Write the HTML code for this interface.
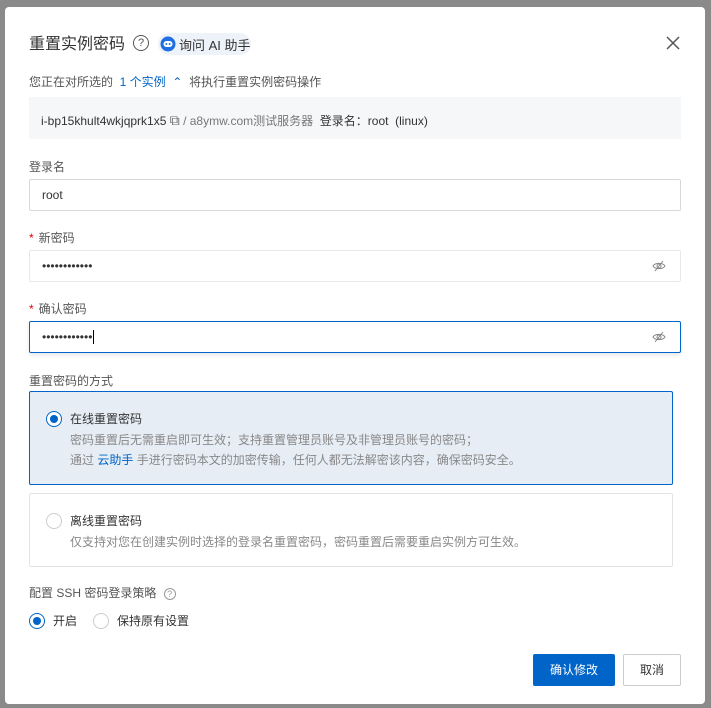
<!DOCTYPE html>
<html><head><meta charset="utf-8"><style>
*{box-sizing:border-box;margin:0;padding:0}
body{width:711px;height:708px;background:#8a8a8a;font-family:"Liberation Sans","Noto Sans CJK SC",sans-serif;font-size:12px;color:#333;position:relative;overflow:hidden}
.dlg{position:absolute;left:5px;top:7px;width:700px;height:697px;background:#fff;border-radius:4px}
.a{position:absolute}
.inp{position:absolute;left:24px;width:652px;height:32px;border:1px solid #d8d8d8;border-radius:2px;padding-left:12px;line-height:30px;font-size:12px;color:#333}
.lbl{position:absolute;left:24px;font-size:12px;color:#555}
.req{color:#d00;margin-right:5px}
.card{position:absolute;left:24px;width:644px;border:1px solid #e3e3e3;border-radius:2px}
.radio{position:absolute;width:16px;height:16px;border-radius:50%;border:1px solid #ccc;background:#fff}
.radio.on{border-color:#0064c8}
.radio.on::after{content:"";position:absolute;left:3px;top:3px;width:8px;height:8px;border-radius:50%;background:#0064c8}
.eye{position:absolute;right:14px;top:9px}
</style></head><body>
<div class="dlg">
<div class="a" style="left:24px;top:23px;font-size:16px;color:#333">重置实例密码</div>
<div class="a" style="left:128px;top:28px;width:16px;height:16px;border:1.3px solid #555;border-radius:50%;font-size:11px;line-height:14px;text-align:center;color:#555">?</div>
<div class="a" style="left:153px;top:26px;width:93px;height:22px;background:#eef3fa;border-radius:11px"></div>
<svg class="a" style="left:155px;top:29px" width="16" height="16" viewBox="0 0 16 16"><circle cx="8" cy="8" r="7.5" fill="#1f6fe0"/><rect x="3.5" y="5" width="9" height="6" rx="3" fill="#fff"/><circle cx="6.3" cy="8" r="1" fill="#1f6fe0"/><circle cx="9.7" cy="8" r="1" fill="#1f6fe0"/></svg>
<div class="a" style="left:174px;top:28px;font-size:13px;color:#333">询问 AI 助手</div>
<svg class="a" style="left:661px;top:29px" width="14" height="14" viewBox="0 0 14 14"><path d="M1 1L13 13M13 1L1 13" stroke="#555" stroke-width="1.5"/></svg>
<div class="a" style="left:24px;top:66px;color:#555">您正在对所选的&nbsp;&nbsp;<span style="color:#0064c8">1 个实例&nbsp;&nbsp;⌃</span>&nbsp;&nbsp;将执行重置实例密码操作</div>
<div class="a" style="left:24px;top:90px;width:652px;height:42px;background:#f6f7f9"></div>
<div class="a" style="left:36px;top:105px;color:#333">i-bp15khult4wkjqprk1x5 <span style="color:#666;font-size:14px">⧉</span> <span style="color:#777">/ a8ymw.com测试服务器</span>&nbsp;&nbsp;登录名：root&nbsp;&nbsp;(linux)</div>
<div class="lbl" style="top:151px">登录名</div>
<div class="inp" style="top:172px">root</div>
<div class="lbl" style="top:222px"><span class="req">*</span>新密码</div>
<div class="inp" style="top:243px;border-color:#e8e8e8">••••••••••••
<svg class="eye" width="14" height="12" viewBox="0 0 14 12"><path d="M1 6C3 2.5 11 2.5 13 6C11 9.5 3 9.5 1 6Z" fill="none" stroke="#888"/><circle cx="7" cy="6" r="2" fill="none" stroke="#888"/><path d="M11 1L3 11" stroke="#888"/></svg></div>
<div class="lbl" style="top:293px"><span class="req">*</span>确认密码</div>
<div class="inp" style="top:314px;border-color:#0064c8;box-shadow:0 2px 4px rgba(0,0,0,.1)">••••••••••••<span style="border-left:1px solid #000;margin-left:1px"></span>
<svg class="eye" width="14" height="12" viewBox="0 0 14 12"><path d="M1 6C3 2.5 11 2.5 13 6C11 9.5 3 9.5 1 6Z" fill="none" stroke="#888"/><circle cx="7" cy="6" r="2" fill="none" stroke="#888"/><path d="M11 1L3 11" stroke="#888"/></svg></div>
<div class="lbl" style="top:365px">重置密码的方式</div>
<div class="card" style="top:384px;height:94px;background:#e6edf5;border-color:#0064c8"></div>
<div class="radio on" style="left:41px;top:404px"></div>
<div class="a" style="left:65px;top:403px;color:#333">在线重置密码</div>
<div class="a" style="left:65px;top:424px;color:#888">密码重置后无需重启即可生效；支持重置管理员账号及非管理员账号的密码；</div>
<div class="a" style="left:65px;top:444px;color:#888">通过 <span style="color:#0064c8">云助手</span> 手进行密码本文的加密传输，任何人都无法解密该内容，确保密码安全。</div>
<div class="card" style="top:486px;height:74px"></div>
<div class="radio" style="left:41px;top:506px"></div>
<div class="a" style="left:65px;top:505px;color:#333">离线重置密码</div>
<div class="a" style="left:65px;top:526px;color:#888">仅支持对您在创建实例时选择的登录名重置密码，密码重置后需要重启实例方可生效。</div>
<div class="lbl" style="top:577px">配置 SSH 密码登录策略 <span style="display:inline-block;width:12px;height:12px;border:1px solid #999;border-radius:50%;font-size:9px;line-height:10px;text-align:center;color:#999;margin-left:4px">?</span></div>
<div class="radio on" style="left:24px;top:606px"></div>
<div class="a" style="left:48px;top:605px;color:#333">开启</div>
<div class="radio" style="left:88px;top:606px"></div>
<div class="a" style="left:112px;top:605px;color:#333">保持原有设置</div>
<div class="a" style="left:528px;top:647px;width:82px;height:32px;background:#0064c8;color:#fff;text-align:center;line-height:32px;border-radius:2px">确认修改</div>
<div class="a" style="left:618px;top:647px;width:58px;height:32px;border:1px solid #ccc;color:#333;text-align:center;line-height:30px;border-radius:2px">取消</div>
</div>
</body></html>
